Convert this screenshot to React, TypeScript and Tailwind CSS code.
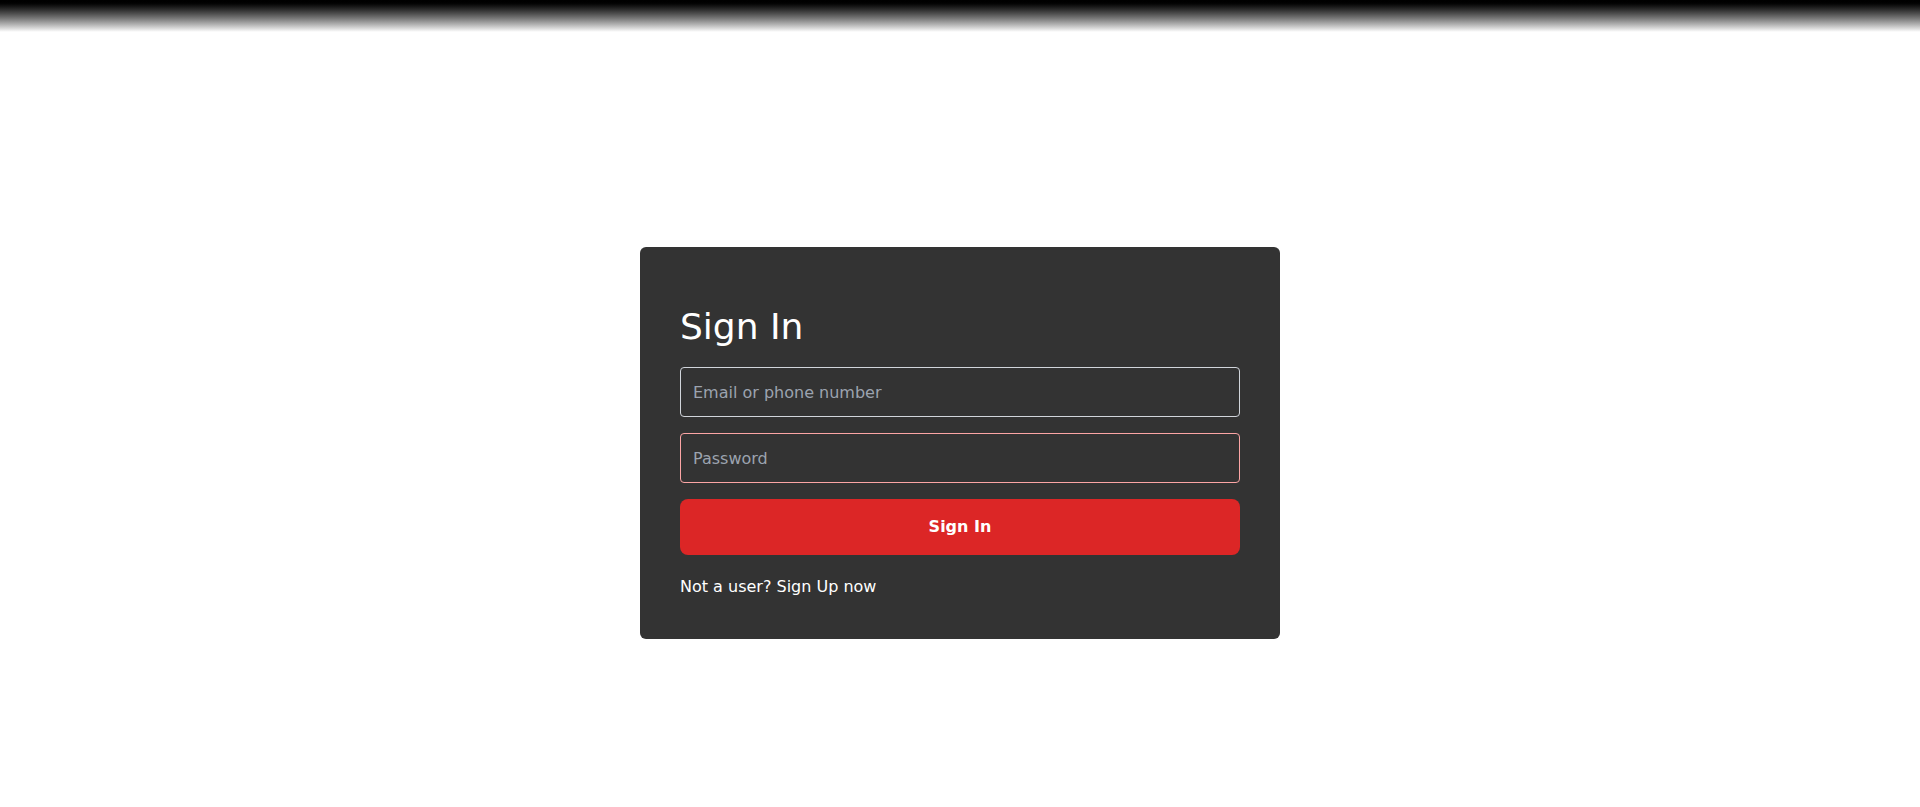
import React, { useState } from 'react';

const App: React.FC = () => {
  const [email, setEmail] = useState('');
  const [password, setPassword] = useState('');

  return (
    <div className="min-h-screen bg-white font-['DejaVu_Sans',sans-serif]">
      {/* Header fade */}
      <div className="h-8 bg-gradient-to-b from-black to-white" />

      <main className="flex justify-center pt-[215px]">
        <div className="w-[640px] rounded-md bg-[#333333] px-10 pt-[60px] pb-[40px] text-white">
          <h1 className="mb-[20px] text-4xl font-normal">Sign In</h1>
          <form className="flex flex-col" onSubmit={(e) => e.preventDefault()}>
            <input
              type="text"
              value={email}
              onChange={(e) => setEmail(e.target.value)}
              placeholder="Email or phone number"
              className="h-[50px] rounded border border-[#d1d5db] bg-transparent px-3 text-base text-white placeholder:text-[#9ca3af] outline-none"
            />
            <input
              type="password"
              value={password}
              onChange={(e) => setPassword(e.target.value)}
              placeholder="Password"
              className="mt-4 h-[50px] rounded border border-[#fca5a5] bg-transparent px-3 text-base text-white placeholder:text-[#9ca3af] outline-none"
            />
            <button
              type="submit"
              className="mt-4 h-14 rounded-lg bg-[#dc2626] text-base font-bold text-white"
            >
              Sign In
            </button>
          </form>
          <p className="mt-5 text-base leading-6">
            Not a user? <a href="#">Sign Up now</a>
          </p>
        </div>
      </main>
    </div>
  );
};

export default App;
